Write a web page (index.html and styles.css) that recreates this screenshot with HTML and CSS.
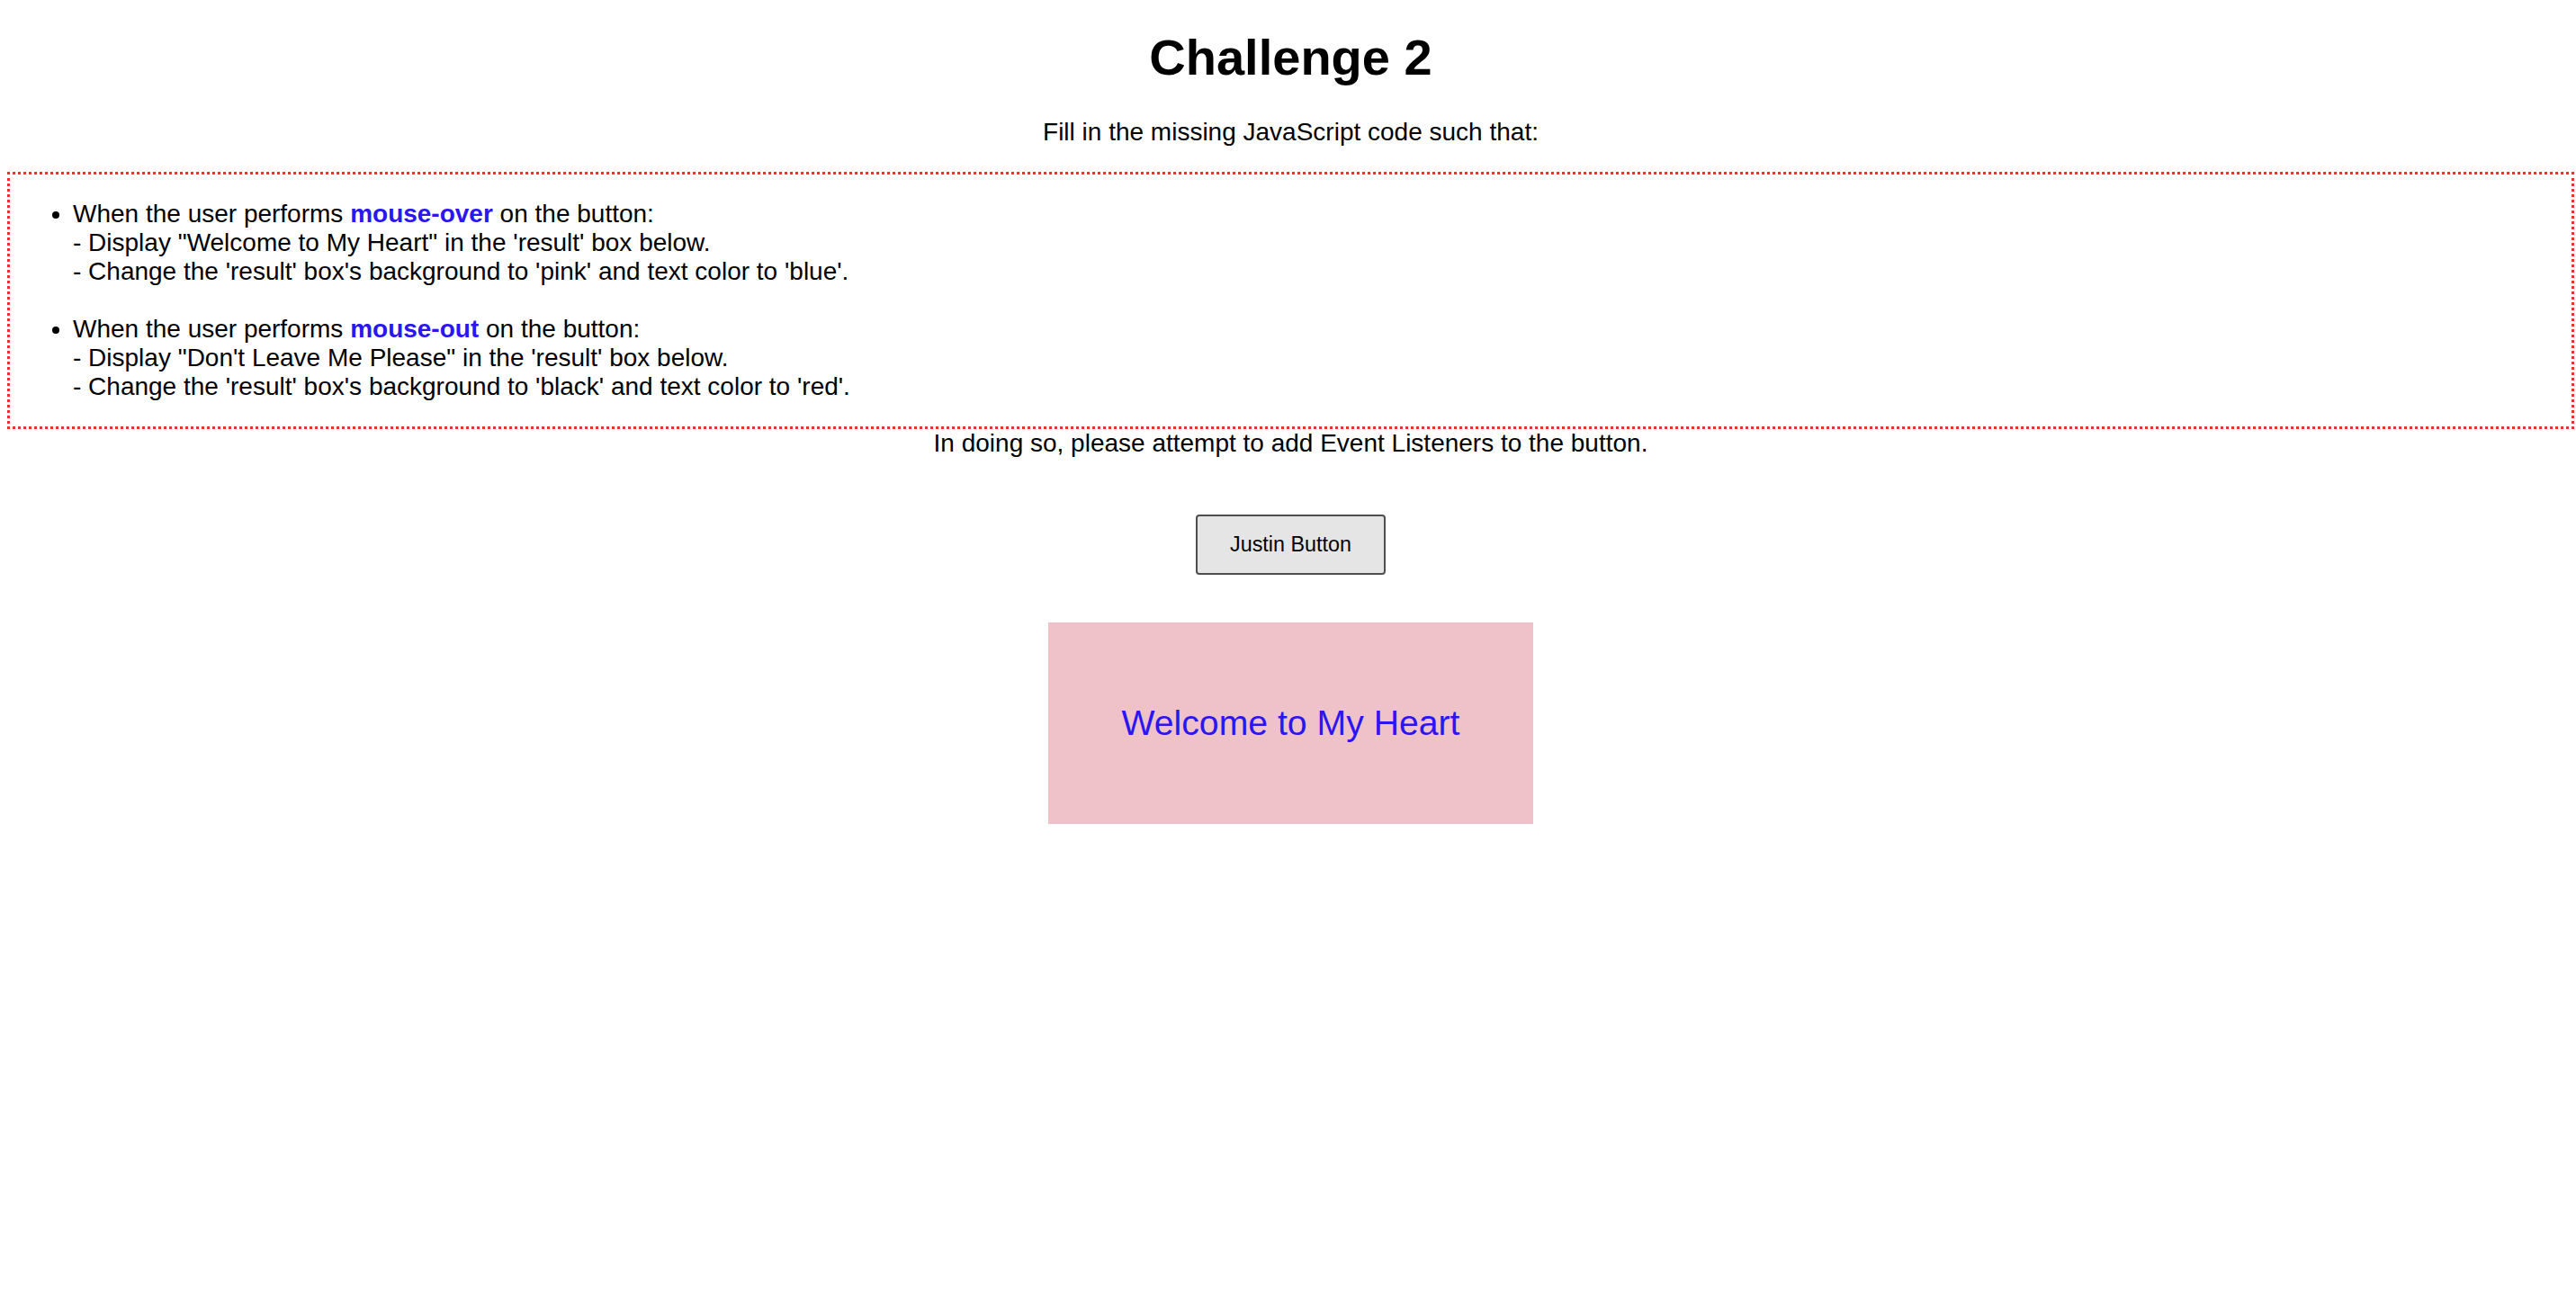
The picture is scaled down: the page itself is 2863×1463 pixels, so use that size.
FILE: index.html
```html
<!DOCTYPE html>
<html lang="en">
<head>
<meta charset="utf-8">
<title>Challenge 2</title>
<link rel="stylesheet" href="styles.css">
</head>
<body>
  <h1 class="title">Challenge 2</h1>
  <p class="intro">Fill in the missing JavaScript code such that:</p>
  <div class="rules">
    <ul class="rule-list">
      <li>When the user performs <b class="event">mouse-over</b> on the button:<br>- Display "Welcome to My Heart" in the 'result' box below.<br>- Change the 'result' box's background to 'pink' and text color to 'blue'.</li>
      <li class="rule-next">When the user performs <b class="event">mouse-out</b> on the button:<br>- Display "Don't Leave Me Please" in the 'result' box below.<br>- Change the 'result' box's background to 'black' and text color to 'red'.</li>
    </ul>
  </div>
  <div class="note">In doing so, please attempt to add Event Listeners to the button.</div>
  <div class="button-row">
    <button class="justin-btn" type="button">Justin Button</button>
  </div>
  <div class="result">Welcome to My Heart</div>
</body>
</html>
```

FILE: styles.css
```css
html {
  background: #ffffff;
}

body {
  margin: 8px 2px 8px 8px;
  font-family: "Liberation Sans", Arial, sans-serif;
  font-size: 28px;
  color: #000000;
  text-align: center;
}

.title {
  font-size: 56px;
  font-weight: bold;
  margin: 23px 0 35px;
}

.intro {
  margin: 0 0 28px;
}

.rules {
  border: 3px dotted #e3372c;
  text-align: left;
}

.rule-list {
  margin: 28px 0;
  padding-left: 70px;
}

.rule-next {
  margin-top: 32px;
}

.event {
  color: #2b16f2;
}

.button-row {
  margin-top: 63px;
}

.justin-btn {
  font-family: "Liberation Sans", Arial, sans-serif;
  font-size: 23.33px;
  color: #000000;
  background: #e5e5e5;
  border: 2px solid #4f4f4f;
  border-radius: 4px;
  padding: 18px 36px;
  margin: 0;
  cursor: pointer;
}

.result {
  width: 539px;
  height: 224px;
  margin: 53px auto 0;
  background: #efc1c8;
  color: #2b16f2;
  font-size: 39.2px;
  display: flex;
  align-items: center;
  justify-content: center;
}
```
